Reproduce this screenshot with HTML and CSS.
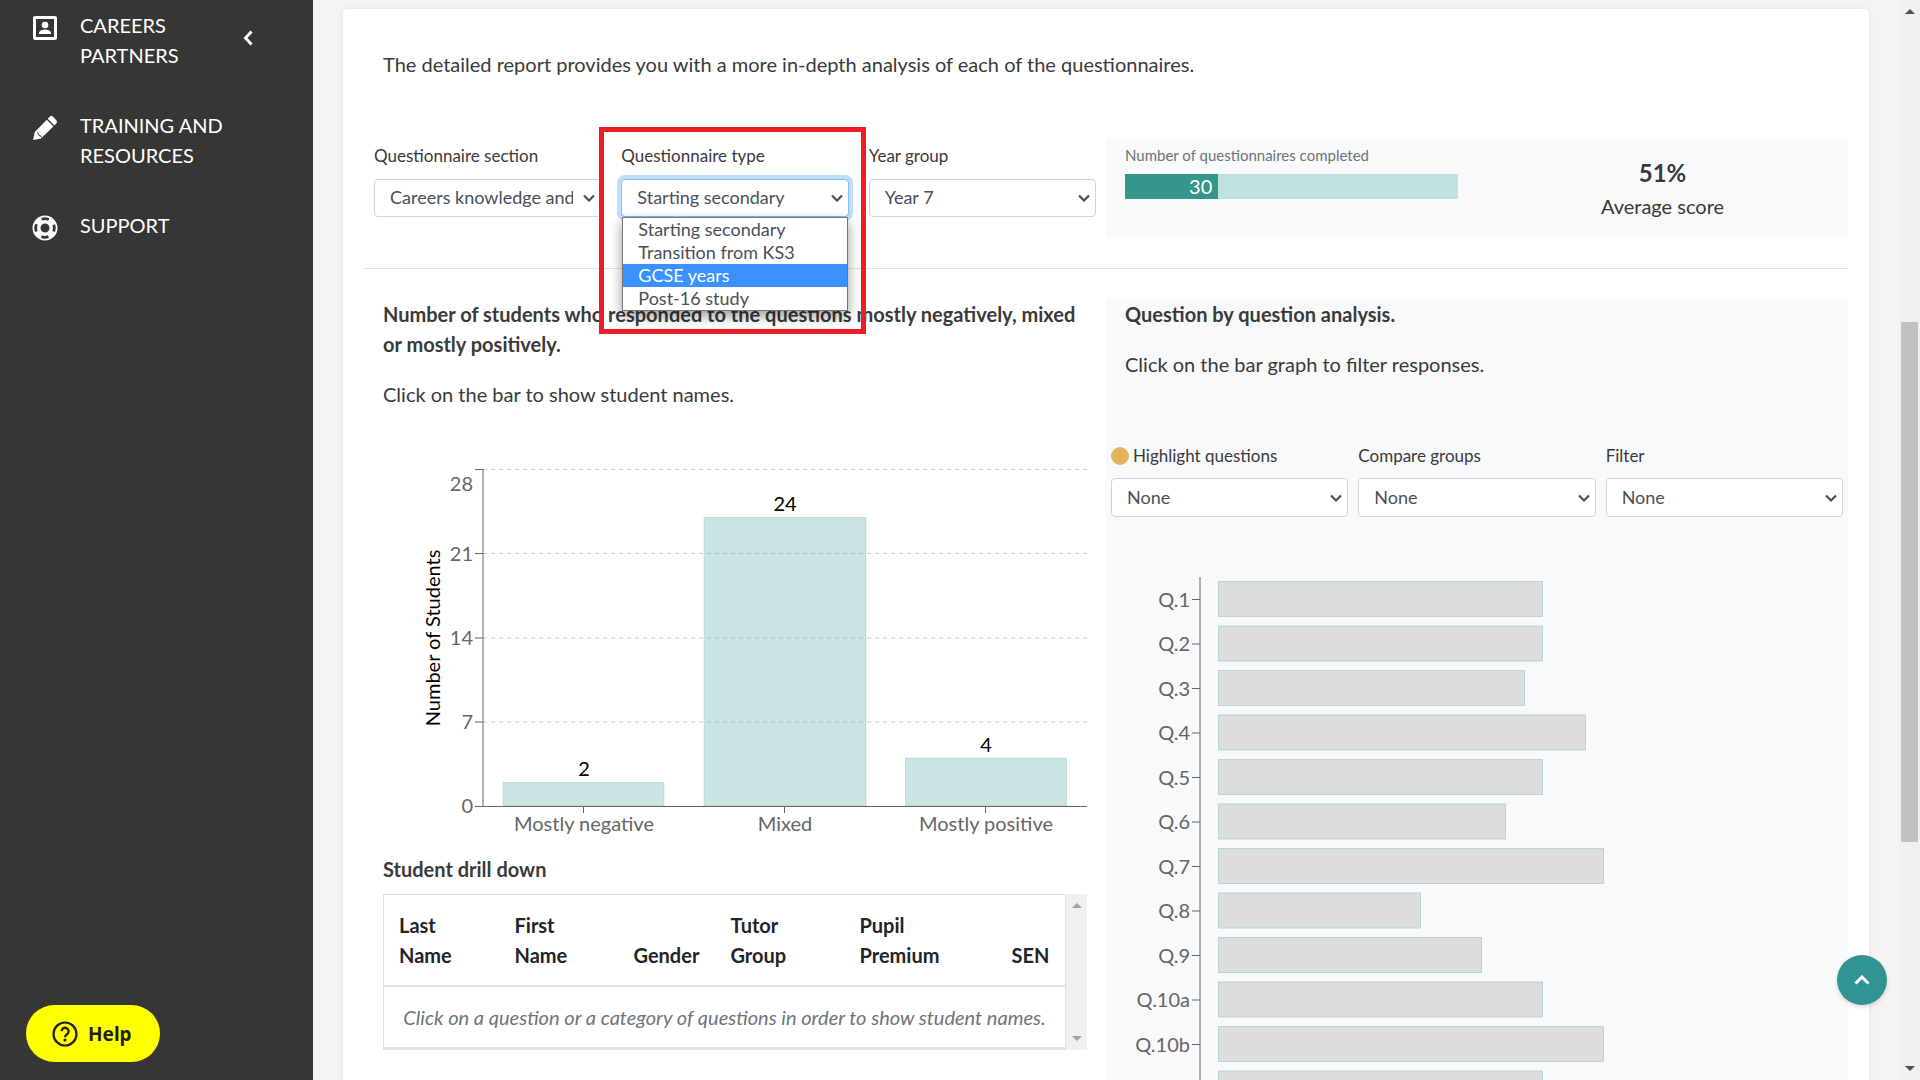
FILE: index.html
```html
<!DOCTYPE html>
<html lang="en">
<head>
<meta charset="utf-8">
<meta name="viewport" content="width=device-width, initial-scale=1">
<title>Detailed report</title>
<link rel="stylesheet" href="styles.css">
</head>
<body>
<div class="app">
  <aside class="sidebar">
    <nav class="menu">
      <a class="menu-item" href="#partners">
        <svg class="menu-icon" viewBox="0 0 26 26" aria-hidden="true"><path fill="currentColor" fill-rule="evenodd" d="M3 1h20a2 2 0 0 1 2 2v20a2 2 0 0 1-2 2H3a2 2 0 0 1-2-2V3a2 2 0 0 1 2-2zm1 3v18h18V4z"/><circle cx="13" cy="10" r="3.300" fill="currentColor"/><path fill="currentColor" d="M7 19v-1c0-2.500 4-3.500 6-3.500s6 1 6 3.500v1z"/></svg>
        <span class="menu-text">CAREERS PARTNERS</span>
        <svg class="menu-arrow" viewBox="0 0 10 16" aria-hidden="true"><path d="M8.500 1.500 2.500 8l6 6.500" fill="none" stroke="currentColor" stroke-width="3"/></svg>
      </a>
      <a class="menu-item" href="#training">
        <svg class="menu-icon" viewBox="0 0 26 26" aria-hidden="true"><path fill="currentColor" d="M18 1.500a2 2 0 0 1 2.800 0l3.700 4a2 2 0 0 1 0 2.700L22.300 10.500 15.700 3.800zM14.800 4.700l6.600 6.700L9 23.400 1 25l1.800-8z"/><path d="M5 17.500l1.500 1 .5 2 2 .5.500 1.500" fill="none" stroke="#363634" stroke-width="1"/></svg>
        <span class="menu-text">TRAINING AND RESOURCES</span>
      </a>
      <a class="menu-item" href="#support">
        <svg class="menu-icon" viewBox="0 0 26 26" aria-hidden="true"><circle cx="13" cy="13" r="8.500" fill="none" stroke="currentColor" stroke-width="8"/><g stroke="#363634" fill="none"><circle cx="13" cy="13" r="9.300" stroke-width="2.800" stroke-dasharray="7.300 7.300" stroke-dashoffset="3.650"/></g></svg>
        <span class="menu-text">SUPPORT</span>
      </a>
    </nav>
    <button class="help" type="button">
      <svg class="help-icon" viewBox="0 0 26 26" aria-hidden="true"><circle cx="13" cy="13" r="11.500" fill="none" stroke="currentColor" stroke-width="2.200"/><path d="M9.600 10.300a3.500 3.500 0 1 1 5.600 2.800c-1.400 1-2.200 1.500-2.200 3.200" fill="none" stroke="currentColor" stroke-width="2.300"/><circle cx="13" cy="19" r="1.500" fill="currentColor"/></svg>
      <span>Help</span>
    </button>
  </aside>

  <main class="main">
    <section class="card">
      <p class="intro">The detailed report provides you with a more in-depth analysis of each of the questionnaires.</p>

      <div class="halves summary">
        <div class="thirds">
          <div class="field wide">
            <label for="section">Questionnaire section</label>
            <select id="section"><option>Careers knowledge and skills</option></select>
          </div>
          <div class="field wide">
            <label for="type">Questionnaire type</label>
            <select id="type" class="focused"><option>Starting secondary</option><option>Transition from KS3</option><option>GCSE years</option><option>Post-16 study</option></select>
            <ul class="options">
              <li>Starting secondary</li>
              <li>Transition from KS3</li>
              <li class="active">GCSE years</li>
              <li>Post-16 study</li>
            </ul>
            <div class="callout"></div>
          </div>
          <div class="field wide">
            <label for="year">Year group</label>
            <select id="year"><option>Year 7</option></select>
          </div>
        </div>
        <div class="stats">
          <div class="completed">
            <div class="completed-label">Number of questionnaires completed</div>
            <div class="progress"><div class="progress-fill" style="width:28%">30</div></div>
          </div>
          <div class="score">
            <strong>51%</strong>
            <span>Average score</span>
          </div>
        </div>
      </div>

      <hr>

      <div class="halves">
        <div class="students">
          <h2>Number of students who responded to the questions mostly negatively, mixed or mostly positively.</h2>
          <p>Click on the bar to show student names.</p>
          <svg class="chart" viewBox="0 0 704 404" role="img" aria-label="Number of students by response">
            <g class="grid">
              <path d="M100 29.500H704M100 113.500H704M100 198H704M100 282H704"/>
            </g>
            <g class="bar">
              <rect x="120" y="342.500" width="161" height="23.500"/>
              <rect x="321" y="77.500" width="162" height="288.500"/>
              <rect x="522.500" y="318" width="161" height="48"/>
            </g>
            <path class="axis" d="M100 29V366M92 29.500h8M92 113.500h8M92 198h8M92 282h8M92 366.500H704M200.500 366v7M401.500 366v7M602.500 366v7"/>
            <g class="tick end">
              <text x="90" y="51">28</text><text x="90" y="121">21</text><text x="90" y="205">14</text><text x="90" y="289">7</text><text x="90" y="373">0</text>
            </g>
            <g class="tick middle">
              <text x="201" y="391">Mostly negative</text><text x="402" y="391">Mixed</text><text x="603" y="391">Mostly positive</text>
            </g>
            <g class="value middle">
              <text x="201" y="336">2</text><text x="402" y="71">24</text><text x="603" y="312">4</text>
              <text transform="translate(57 198) rotate(-90)">Number of Students</text>
            </g>
          </svg>
          <h3>Student drill down</h3>
          <div class="drill">
            <table>
              <thead>
                <tr><th class="c1">Last Name</th><th class="c2">First Name</th><th class="c3">Gender</th><th class="c4">Tutor Group</th><th class="c5">Pupil Premium</th><th>SEN</th></tr>
              </thead>
              <tbody>
                <tr><td colspan="6">Click on a question or a category of questions in order to show student names.</td></tr>
              </tbody>
            </table>
            <div class="drill-scroll"><i class="up"></i><i class="down"></i></div>
          </div>
        </div>

        <div class="questions">
          <div class="questions-head">
            <h2>Question by question analysis.</h2>
            <p>Click on the bar graph to filter responses.</p>
          </div>
          <div class="thirds">
            <div class="field">
              <label for="highlight"><i class="dot"></i>Highlight questions</label>
              <select id="highlight"><option>None</option></select>
            </div>
            <div class="field">
              <label for="compare">Compare groups</label>
              <select id="compare"><option>None</option></select>
            </div>
            <div class="field">
              <label for="filter">Filter</label>
              <select id="filter"><option>None</option></select>
            </div>
          </div>
          <svg class="qchart" viewBox="0 0 742 560" role="img" aria-label="Responses by question">
            <g class="qbar">
              <rect x="112.500" y="4.500" width="324" height="35"/>
              <rect x="112.500" y="49" width="324" height="35"/>
              <rect x="112.500" y="93.500" width="306" height="35"/>
              <rect x="112.500" y="138" width="367" height="35"/>
              <rect x="112.500" y="182.500" width="324" height="35"/>
              <rect x="112.500" y="227" width="287" height="35"/>
              <rect x="112.500" y="271.500" width="385" height="35"/>
              <rect x="112.500" y="316" width="202" height="35"/>
              <rect x="112.500" y="360.500" width="263" height="35"/>
              <rect x="112.500" y="405" width="324" height="35"/>
              <rect x="112.500" y="449.500" width="385" height="35"/>
              <rect x="112.500" y="494" width="324" height="35"/>
            </g>
            <path class="axis" d="M94 0V560M86 22.500h8M86 67h8M86 111.500h8M86 156h8M86 200.500h8M86 245h8M86 289.500h8M86 334h8M86 378.500h8M86 423h8M86 467.500h8M86 512h8"/>
            <g class="tick end">
              <text x="84" y="30">Q.1</text><text x="84" y="74">Q.2</text><text x="84" y="119">Q.3</text><text x="84" y="163">Q.4</text><text x="84" y="208">Q.5</text><text x="84" y="252">Q.6</text><text x="84" y="297">Q.7</text><text x="84" y="341">Q.8</text><text x="84" y="386">Q.9</text><text x="84" y="430">Q.10a</text><text x="84" y="475">Q.10b</text>
            </g>
          </svg>
        </div>
      </div>
    </section>
    <button class="to-top" type="button" aria-label="Back to top">
      <svg viewBox="0 0 16 10" aria-hidden="true"><path d="M1.500 8.500 8 2l6.500 6.500" fill="none" stroke="currentColor" stroke-width="3"/></svg>
    </button>
  </main>
  <div class="page-scroll"><i class="up"></i><div class="thumb"></div><i class="down"></i></div>
</div>
</body>
</html>
```
FILE: styles.css
```css
* { box-sizing: border-box; }
body {
  margin: 0;
  background: #f4f4f4;
  color: #3a3a3a;
  font: 20px/30px Lato, "Liberation Sans", sans-serif;
}
h2, h3, p, ul { margin: 0; padding: 0; }
h2, h3 { font-size: 20px; font-weight: 700; }
button { border: 0; cursor: pointer; }

.app { display: flex; height: 100vh; overflow: hidden; }

/* Sidebar */
.sidebar {
  flex: none;
  width: 313px;
  padding: 10px 26px 18px;
  background: #363634;
  display: flex;
  flex-direction: column;
  justify-content: space-between;
  align-items: flex-start;
}
.menu { display: flex; flex-direction: column; gap: 40px; width: 100%; }
.menu-item {
  display: flex;
  padding: 0 34px 0 6px;
  color: #fff;
  text-decoration: none;
}
.menu-icon { flex: none; width: 26px; height: 26px; margin: 5px 22px 0 0; }
.menu-text { width: 148px; }
.menu-arrow { width: 10px; height: 16px; margin: 20px 0 0 auto; }
.help {
  display: flex;
  align-items: center;
  gap: 10px;
  height: 57px;
  padding: 0 28px 0 26px;
  border-radius: 29px;
  background: #ff0;
  color: #1f1f1f;
  font: 700 19px/24px "Noto Sans", sans-serif;
}
.help-icon { width: 26px; height: 26px; }

/* Report card */
.main { flex: 1; min-width: 0; padding: 9px 30px 0; }
.card {
  padding: 0 21px 40px;
  border-radius: 5px;
  background: #fff;
  box-shadow: 0 0 6px rgba(0, 0, 0, .08);
}
.intro { padding: 40px 19px 60px; }
.halves { display: grid; grid-template-columns: 1fr 1fr; }
.thirds { display: grid; grid-template-columns: 1fr 1fr 1fr; }
hr { margin: 31px 0 30px; border: 0; border-top: 1px solid #dee2e6; }

.field { position: relative; min-width: 0; padding: 0 5px; }
.field.wide { padding: 0 10px; }
label { display: flex; align-items: center; height: 34px; font-size: 17px; margin-bottom: 6px; }
.dot { width: 18px; height: 18px; margin-right: 4px; border-radius: 50%; background: #e3b35b; }
select {
  appearance: none;
  display: block;
  width: 100%;
  height: 38px;
  padding: 5px 27px 7px 15px;
  border: 1px solid #ced4da;
  border-radius: 4px;
  background: #fff url("data:image/svg+xml,%3Csvg xmlns='http://www.w3.org/2000/svg' viewBox='0 0 12 8'%3E%3Cpath d='M1 1.500l5 5 5-5' fill='none' stroke='%23495057' stroke-width='2.200'/%3E%3C/svg%3E") no-repeat right 5px center / 12px 8px;
  color: #495057;
  font: 18px/24px Lato, sans-serif;
}
.focused { border-color: #80bdff; box-shadow: 0 0 0 4px rgba(0, 123, 255, .25); }
.options {
  position: absolute;
  z-index: 2;
  top: 78px;
  left: 11px;
  right: 11px;
  border: 1px solid #767676;
  background: #fff;
  box-shadow: 0 5px 12px rgba(0, 0, 0, .4);
  color: #495057;
  font-size: 18px;
  line-height: 23px;
  list-style: none;
}
.options li { padding: 0 15px; }
.options .active { background: #3a91ff; color: #fff; }
.callout {
  position: absolute;
  z-index: 3;
  top: -12px;
  left: -12px;
  right: -7px;
  height: 207px;
  border: 5px solid #ee1c25;
  pointer-events: none;
}

.stats { display: grid; grid-template-columns: 1fr 1fr; height: 98px; background: #f8f9fb; }
.completed { padding: 4px 19px; }
.completed-label { color: #6c757d; font-size: 15px; line-height: 24px; }
.progress { height: 25px; margin-top: 7px; background: #bfe1df; }
.progress-fill { height: 25px; padding-right: 6px; background: #35968b; color: #fff; line-height: 25px; text-align: right; }
.score { display: flex; flex-direction: column; align-items: center; padding-top: 16px; }
.score strong { font-size: 24px; line-height: 36px; }

/* Student chart and table */
.students { padding: 0 19px; }
.students p { padding-top: 20px; }
.chart { display: block; width: 100%; margin-top: 31px; }
.grid path { fill: none; stroke: #ccc; stroke-dasharray: 4 4; }
.axis { fill: none; stroke: #666; }
.bar rect { fill: rgba(49, 148, 147, .25); stroke: rgba(49, 148, 147, .2); }
.qbar rect { fill: #ddd; stroke: #b2d8d8; }
text { font: 20px Lato, sans-serif; }
.tick { fill: #666; }
.value { fill: #000; }
.end { text-anchor: end; }
.middle { text-anchor: middle; }
h3 { padding: 10px 0; }
.drill { display: flex; }
table {
  flex: 1;
  width: 100%;
  border: 1px solid #dee2e6;
  border-bottom-width: 3px;
  border-collapse: collapse;
  table-layout: fixed;
  color: #212529;
}
th { padding: 15px; text-align: left; vertical-align: bottom; border-bottom: 2px solid #dee2e6; }
td { padding: 15px; text-align: center; font-style: italic; color: #6c757d; }
.c1 { width: 116px; }
.c2 { width: 119px; }
.c3 { width: 97px; }
.c4 { width: 129px; }
.c5 { width: 152px; }
.drill-scroll {
  flex: none;
  display: flex;
  flex-direction: column;
  justify-content: space-between;
  align-items: center;
  width: 21px;
  padding: 9px 0;
  background: #f0f0f0;
}
.up, .down { border: 5px solid transparent; }
.up { border-top: 0; border-bottom-color: #505050; }
.down { border-bottom: 0; border-top-color: #505050; }
.drill-scroll .up { border-bottom-color: #a3a3a3; }
.drill-scroll .down { border-top-color: #a3a3a3; }

/* Question analysis */
.questions { background: #f8f9fb; }
.questions-head { padding: 0 19px 60px; }
.questions-head p { padding-top: 20px; }
.questions label { margin-bottom: 5px; }
.questions select { height: 39px; }
.qchart { display: block; width: 100%; margin-top: 60px; }

.to-top {
  position: fixed;
  right: 33px;
  bottom: 75px;
  display: flex;
  align-items: center;
  justify-content: center;
  width: 50px;
  height: 50px;
  border-radius: 50%;
  background: #319493;
  color: #fff;
  box-shadow: 0 2px 4px rgba(0, 0, 0, .15);
}
.to-top svg { width: 16px; height: 10px; flex: none; }

.page-scroll {
  flex: none;
  display: flex;
  flex-direction: column;
  align-items: center;
  width: 21px;
  padding: 9px 0;
  background: #f0f0f0;
}
.page-scroll .down { margin-top: auto; }
.thumb { width: 17px; height: 49%; margin-top: 308px; background: #c1c1c1; }
```
